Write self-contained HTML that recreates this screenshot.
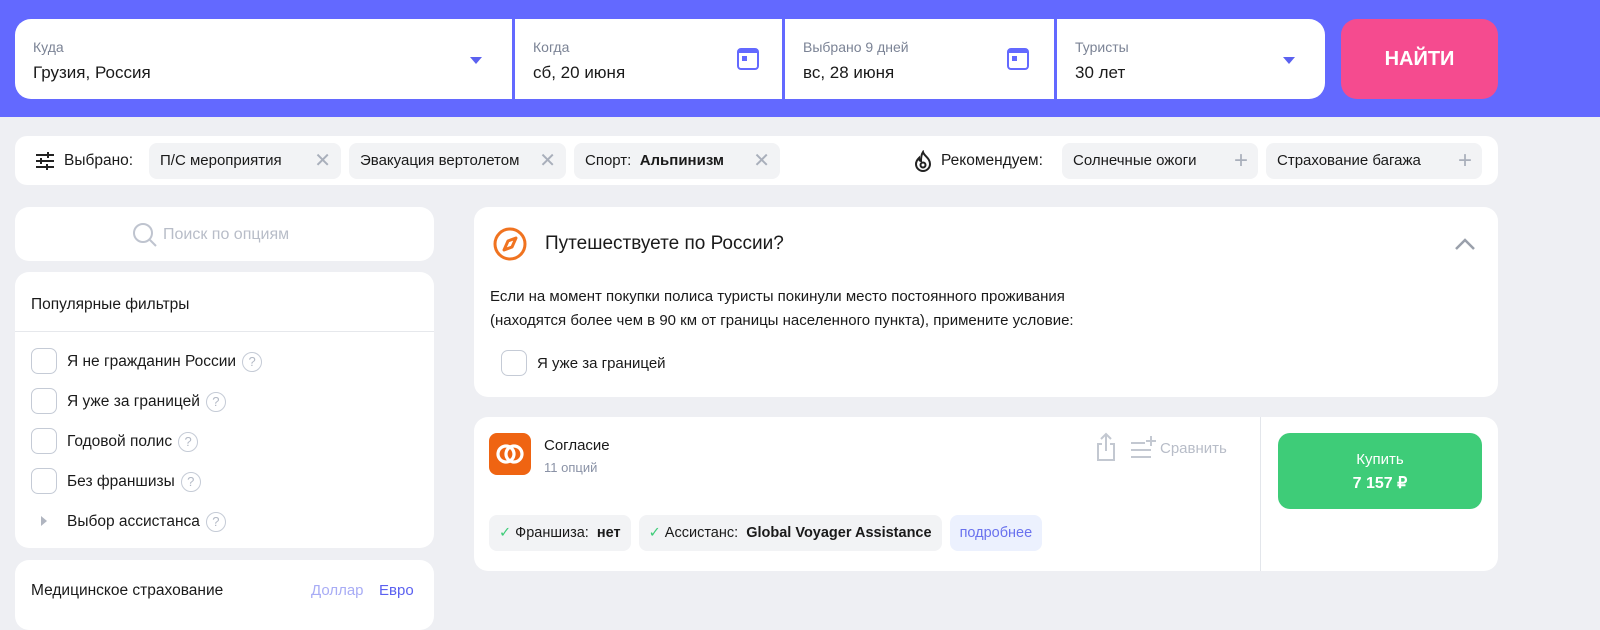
<!DOCTYPE html>
<html><head><meta charset="utf-8"><style>
*{box-sizing:border-box;margin:0;padding:0}
body{width:1600px;height:612px;overflow:hidden;background:#eeeff3;font-family:"Liberation Sans",sans-serif;color:#1a1a1a;position:relative}
.abs{position:absolute}
.hdr{left:0;top:0;width:1600px;height:117px;background:#6369ff}
.bar{left:15px;top:19px;width:1310px;height:80px;background:#fff;border-radius:16px;overflow:hidden}
.fld{position:absolute;top:0;height:80px}
.lbl{position:absolute;left:18px;top:20px;font-size:14px;color:#7b8395}
.val{position:absolute;left:18px;top:44px;font-size:17px;color:#1a1a1a}
.sep{position:absolute;top:0;width:3px;height:80px;background:#6369ff}
.tri{position:absolute;width:0;height:0;border-left:6px solid transparent;border-right:6px solid transparent;border-top:7px solid #5b61f0}
.cal{position:absolute;width:22px;height:22px;border:2.5px solid #6369ff;border-radius:4px;border-top-width:5px}
.cal:after{content:"";position:absolute;left:3px;top:3px;width:5px;height:5px;background:#6369ff}
.btn{left:1341px;top:19px;width:157px;height:80px;background:#f54b8f;border-radius:16px;color:#fff;font-weight:bold;font-size:20px;text-align:center;line-height:80px}
.card{background:#fff;border-radius:14px}
.chips{position:absolute;top:7px;display:flex;gap:8px}
.chip{position:relative;height:36px;background:#f2f3f5;border-radius:8px;font-size:15px;line-height:36px;padding-left:11px;white-space:nowrap}
.x{position:absolute;right:10px;top:0;color:#a9afbb;font-size:20px}
.cb{position:absolute;width:26px;height:26px;border:1.5px solid #c5cbd6;border-radius:7px}
.q{display:inline-block;width:20px;height:20px;border:1.5px solid #c5cbd6;border-radius:50%;color:#b3b9c5;font-size:13px;text-align:center;line-height:17px;vertical-align:middle;margin-left:6px}
.fi{position:absolute;left:66px;font-size:15.5px}
.tags{position:absolute;left:15px;top:98px;display:flex;gap:8px}
.tag{height:36px;background:#f2f3f5;border-radius:8px;font-size:14.5px;line-height:36px;padding:0 10px;white-space:nowrap}
</style></head><body>
<div class="abs hdr"></div>
<div class="abs bar">
 <div class="fld" style="left:0;width:498px"><div class="lbl">Куда</div><div class="val">Грузия, Россия</div><div class="tri" style="left:455px;top:38px"></div></div>
 <div class="sep" style="left:497px"></div>
 <div class="fld" style="left:500px;width:268px"><div class="lbl">Когда</div><div class="val">сб, 20 июня</div><div class="cal" style="left:222px;top:29px"></div></div>
 <div class="sep" style="left:767px"></div>
 <div class="fld" style="left:770px;width:270px"><div class="lbl">Выбрано 9 дней</div><div class="val">вс, 28 июня</div><div class="cal" style="left:222px;top:29px"></div></div>
 <div class="sep" style="left:1039px"></div>
 <div class="fld" style="left:1042px;width:268px"><div class="lbl">Туристы</div><div class="val">30 лет</div><div class="tri" style="left:226px;top:38px"></div></div>
</div>
<div class="abs btn">НАЙТИ</div>

<div class="abs card" style="left:15px;top:136px;width:1483px;height:49px;border-radius:12px">
 <svg class="abs" style="left:20px;top:15px" width="20" height="20" viewBox="0 0 20 20" stroke="#222" stroke-width="2"><path d="M1 4h18M1 10h18M1 16h18"/><path d="M13 1v6M6 7v6M12 13v6" /></svg>
 <div class="abs" style="left:49px;top:16px;font-size:15.5px">Выбрано:</div>
 <div class="chips" style="left:134px">
  <div class="chip" style="width:192px">П/С мероприятия<span class="x">✕</span></div>
  <div class="chip" style="width:217px">Эвакуация вертолетом<span class="x">✕</span></div>
  <div class="chip" style="width:206px">Спорт:&nbsp; <b>Альпинизм</b><span class="x">✕</span></div>
 </div>
 <svg class="abs" style="left:899px;top:14px" width="18" height="22" viewBox="0 0 18 22" fill="none" stroke="#222" stroke-width="2"><path d="M9 2c1 4 7 6 7 12a7 7 0 0 1-14 0c0-3 2-5 3-6 0 2 1 3 2 3 0-3 0-6 2-9z"/><circle cx="9" cy="15" r="2.5"/></svg>
 <div class="abs" style="left:926px;top:16px;font-size:15.5px">Рекомендуем:</div>
 <div class="chips" style="left:1047px">
  <div class="chip" style="width:196px">Солнечные ожоги<span class="x" style="font-size:24px">+</span></div>
  <div class="chip" style="width:216px">Страхование багажа<span class="x" style="font-size:24px">+</span></div>
 </div>
</div>

<div class="abs card" style="left:15px;top:207px;width:419px;height:54px">
 <svg class="abs" style="left:117px;top:15px" width="26" height="26" viewBox="0 0 26 26" fill="none" stroke="#bfc4cf" stroke-width="2"><circle cx="11" cy="11" r="9"/><path d="M18 18l6 6"/></svg>
 <div class="abs" style="left:148px;top:19px;font-size:16px;color:#b8bdc8">Поиск по опциям</div>
</div>
<div class="abs card" style="left:15px;top:272px;width:419px;height:276px">
 <div class="abs" style="left:16px;top:24px;font-size:15.5px">Популярные фильтры</div>
 <div class="abs" style="left:0;top:59px;width:419px;height:1px;background:#e6e8ec"></div>
 <div class="cb" style="left:16px;top:76px"></div><div class="fi" style="left:52px;top:80px">Я не гражданин России<span class="q">?</span></div>
 <div class="cb" style="left:16px;top:116px"></div><div class="fi" style="left:52px;top:120px">Я уже за границей<span class="q">?</span></div>
 <div class="cb" style="left:16px;top:156px"></div><div class="fi" style="left:52px;top:160px">Годовой полис<span class="q">?</span></div>
 <div class="cb" style="left:16px;top:196px"></div><div class="fi" style="left:52px;top:200px">Без франшизы<span class="q">?</span></div>
 <div class="abs" style="left:26px;top:244px;width:0;height:0;border-top:5px solid transparent;border-bottom:5px solid transparent;border-left:6px solid #b0b5c0"></div>
 <div class="fi" style="left:52px;top:240px">Выбор ассистанса<span class="q">?</span></div>
</div>
<div class="abs card" style="left:15px;top:560px;width:419px;height:70px">
 <div class="abs" style="left:16px;top:22px;font-size:15.5px">Медицинское страхование</div>
 <div class="abs" style="left:296px;top:22px;font-size:15px;color:#a8acf5">Доллар</div>
 <div class="abs" style="left:364px;top:22px;font-size:15px;color:#5b61f0">Евро</div>
</div>

<div class="abs card" style="left:474px;top:207px;width:1024px;height:190px">
 <svg class="abs" style="left:18px;top:19px" width="36" height="36" viewBox="0 0 36 36" fill="none" stroke="#f07320" stroke-width="3"><circle cx="18" cy="18" r="15"/><path d="M24 12l-4 9-8 3 4-9z" stroke-linejoin="round"/></svg>
 <div class="abs" style="left:71px;top:26px;font-size:19px">Путешествуете по России?</div>
 <svg class="abs" style="left:980px;top:30px" width="22" height="14" viewBox="0 0 22 14" fill="none" stroke="#9aa0ab" stroke-width="2.5"><path d="M2 12l9-9 9 9"/></svg>
 <div class="abs" style="left:16px;top:78px;font-size:15px;line-height:24px">Если на момент покупки полиса туристы покинули место постоянного проживания<br>(находятся более чем в 90 км от границы населенного пункта), примените условие:</div>
 <div class="cb" style="left:27px;top:143px"></div>
 <div class="abs" style="left:63px;top:148px;font-size:15px">Я уже за границей</div>
</div>

<div class="abs card" style="left:474px;top:417px;width:1024px;height:154px">
 <div class="abs" style="left:15px;top:16px;width:42px;height:42px;background:#ef6412;border-radius:8px"></div>
 <svg class="abs" style="left:15px;top:16px" width="42" height="42" viewBox="0 0 42 42" fill="none" stroke="#fff" stroke-width="3.2"><rect x="9" y="13" width="16" height="16" rx="8" transform="rotate(-35 17 21)"/><rect x="17" y="13" width="16" height="16" rx="8" transform="rotate(-35 25 21)"/></svg>
 <div class="abs" style="left:70px;top:20px;font-size:15px">Согласие</div>
 <div class="abs" style="left:70px;top:43px;font-size:13px;color:#8a92a6">11 опций</div>
 <svg class="abs" style="left:621px;top:15px" width="22" height="30" viewBox="0 0 22 30" fill="none" stroke="#c3c8d1" stroke-width="2"><path d="M7 12H3v16h16V12h-4M11 2v17M6 7l5-5 5 5"/></svg>
 <svg class="abs" style="left:655px;top:18px" width="28" height="26" viewBox="0 0 28 26" fill="none" stroke="#c3c8d1" stroke-width="2"><path d="M2 8h14M2 15h20M2 22h20M22 1v10M17 6h10"/></svg>
 <div class="abs" style="left:686px;top:23px;font-size:15px;color:#b8bdc8">Сравнить</div>
 <div class="tags">
  <div class="tag"><span style="color:#3ecc78">✓</span> Франшиза:&nbsp; <b>нет</b></div>
  <div class="tag"><span style="color:#3ecc78">✓</span> Ассистанс:&nbsp; <b>Global Voyager Assistance</b></div>
  <div class="tag" style="background:#ecf1fe;color:#6a72ee">подробнее</div>
 </div>
 <div class="abs" style="left:786px;top:0;width:1px;height:154px;background:#e3e6eb"></div>
 <div class="abs" style="left:804px;top:16px;width:204px;height:76px;background:#3ecc78;border-radius:12px;color:#fff;text-align:center">
  <div style="margin-top:18px;font-size:15px">Купить</div>
  <div style="margin-top:5px;font-size:16px;font-weight:bold">7 157 ₽</div>
 </div>
</div>
</body></html>
